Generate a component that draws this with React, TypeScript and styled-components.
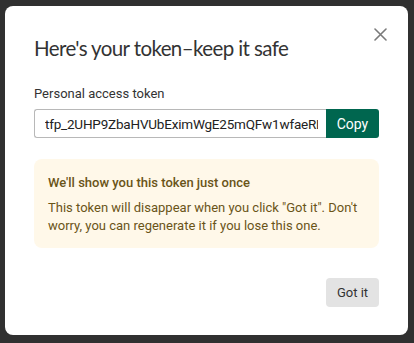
import React from "react";
import styled, { createGlobalStyle } from "styled-components";

const Global = createGlobalStyle`
  html, body { margin: 0; padding: 0; background: #303030; }
  body { font-family: Roboto, "Noto Sans", sans-serif; -webkit-font-smoothing: antialiased; }
  * { box-sizing: border-box; }
`;

const Page = styled.div`
  width: 414px;
  height: 343px;
  padding: 6px 6px 8px 5px;
  display: flex;
`;

const Modal = styled.div`
  position: relative;
  flex: 1;
  background: #fff;
  border-radius: 8px;
  padding: 28px 29px 0 29px;
  display: flex;
  flex-direction: column;
`;

const Close = styled.button`
  position: absolute;
  top: 18px;
  right: 18px;
  width: 20px;
  height: 20px;
  padding: 0;
  border: 0;
  background: transparent;
  display: flex;
  align-items: center;
  justify-content: center;
  cursor: pointer;
`;

const Title = styled.h1`
  margin: 0;
  font-family: Lato, Inter, sans-serif;
  font-weight: 400;
  font-size: 20.5px;
  letter-spacing: -0.6px;
  line-height: 28px;
  color: #333;
`;

const Label = styled.label`
  margin-top: 23px;
  font-size: 13px;
  line-height: 18px;
  color: #333;
`;

const Row = styled.div`
  margin-top: 6px;
  display: flex;
  height: 29px;
`;

const TokenInput = styled.input`
  flex: 1;
  min-width: 0;
  height: 29px;
  border: 1px solid #b8b8b8;
  border-right: 0;
  border-radius: 3px 0 0 3px;
  padding: 0 8px 0 10px;
  font-family: Roboto, sans-serif;
  font-size: 13.5px;
  letter-spacing: -0.2px;
  color: #222;
  outline: none;
  background: #fff;
`;

const CopyButton = styled.button`
  width: 53px;
  height: 29px;
  border: 0;
  border-radius: 0 3px 3px 0;
  background: #00664f;
  color: #fff;
  font-family: Roboto, sans-serif;
  font-size: 14px;
  padding: 0;
  cursor: pointer;
`;

const Alert = styled.div`
  margin-top: 21px;
  background: #fff8e9;
  border-radius: 8px;
  padding: 15px 15px 13px 14px;
  color: #6a5418;
  display: flex;
  flex-direction: column;
  gap: 7px;
`;

const AlertTitle = styled.div`
  font-size: 13px;
  line-height: 18px;
  font-weight: 500;
`;

const AlertBody = styled.div`
  font-size: 13px;
  line-height: 18px;
`;

const Footer = styled.div`
  margin-top: 30px;
  display: flex;
  justify-content: flex-end;
`;

const GotIt = styled.button`
  height: 29px;
  width: 53px;
  border: 0;
  border-radius: 4px;
  background: #e3e3e3;
  color: #333;
  font-family: Roboto, sans-serif;
  font-size: 13px;
  padding: 0;
  cursor: pointer;
`;

export default function App() {
  return (
    <>
      <Global />
      <Page>
        <Modal>
          <Close aria-label="Close">
            <svg width="13" height="13" viewBox="0 0 13 13">
              <path d="M1 1L12 12M12 1L1 12" stroke="#7a7a7a" strokeWidth="1.6" strokeLinecap="round" />
            </svg>
          </Close>
          <Title>Here's your token–keep it safe</Title>
          <Label htmlFor="tok">Personal access token</Label>
          <Row>
            <TokenInput id="tok" readOnly value="tfp_2UHP9ZbaHVUbEximWgE25mQFw1wfaeRLx7KqT3" />
            <CopyButton>Copy</CopyButton>
          </Row>
          <Alert>
            <AlertTitle>We'll show you this token just once</AlertTitle>
            <AlertBody>
              This token will disappear when you click "Got it". Don't worry, you can regenerate it if you lose this one.
            </AlertBody>
          </Alert>
          <Footer>
            <GotIt>Got it</GotIt>
          </Footer>
        </Modal>
      </Page>
    </>
  );
}
